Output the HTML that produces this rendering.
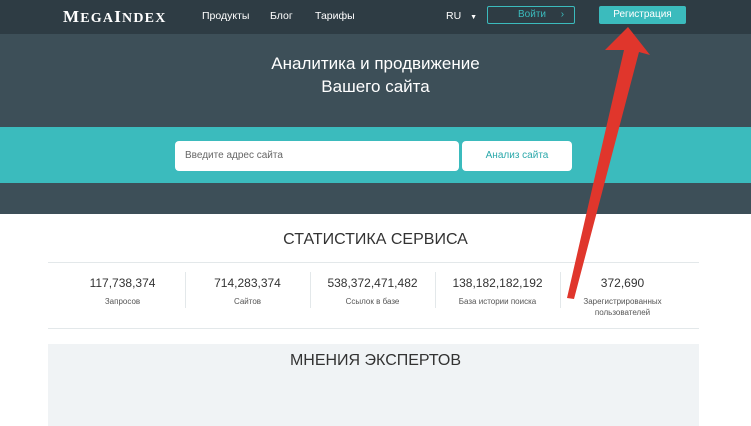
<!DOCTYPE html>
<html><head><meta charset="utf-8"><style>
*{margin:0;padding:0;box-sizing:border-box}
body{width:751px;height:426px;overflow:hidden;background:#fff;font-family:"Liberation Sans",sans-serif;position:relative}
.hdr{position:absolute;left:0;top:0;width:751px;height:34px;background:#2e3c44}
.logo{position:absolute;left:63px;top:7px;color:#fff;font-family:"Liberation Serif",serif;font-weight:bold;font-size:17px;letter-spacing:1.2px}
.nav{position:absolute;top:10px;color:#fff;font-size:10.5px}
.hero{position:absolute;left:0;top:34px;width:751px;height:93px;background:#3d4f58}
.hero h1{position:absolute;left:0;width:751px;top:18px;text-align:center;color:#fff;font-weight:normal;font-size:17px;line-height:23px}
.teal{position:absolute;left:0;top:127px;width:751px;height:56px;background:#3bbbbd}
.dark{position:absolute;left:0;top:183px;width:751px;height:31px;background:#3d4f58}
.inp{position:absolute;left:175px;top:141px;width:284px;height:30px;background:#fff;border-radius:4px;font-size:10px;color:#666;padding:9px 10px}
.btn{position:absolute;left:462px;top:141px;width:110px;height:30px;background:#fff;border-radius:4px;font-size:10px;color:#2aa8aa;text-align:center;line-height:30px}
.title{position:absolute;left:0;width:751px;text-align:center;color:#333;font-size:16px}
.line{position:absolute;left:48px;width:651px;height:1px;background:#e3e8ea}
.st{position:absolute;top:276px;width:125px;text-align:center}
.st b{display:block;font-weight:normal;font-size:12px;color:#333}
.st i{display:block;font-style:normal;font-size:8px;color:#555;margin-top:6px;line-height:11px}
.sep{position:absolute;top:272px;width:1px;height:36px;background:#e3e8ea}
.grey{position:absolute;left:48px;top:344px;width:651px;height:82px;background:#f0f3f5}
</style></head><body>
<div class="hdr">
<div class="logo">M<span style="font-size:14px">EGA</span>I<span style="font-size:14px">NDEX</span></div>
<div class="nav" style="left:202px">Продукты</div>
<div class="nav" style="left:270px">Блог</div>
<div class="nav" style="left:315px">Тарифы</div>
<div class="nav" style="left:446px">RU <span style="font-size:7px;margin-left:6px">▼</span></div>
<div style="position:absolute;left:487px;top:6px;width:88px;height:18px;border:1px solid #3bbbbd;border-radius:2px;color:#3bbbbd;font-size:10px;line-height:16px;padding-left:30px">Войти <span style="margin-left:12px">›</span></div>
<div style="position:absolute;left:599px;top:6px;width:87px;height:18px;background:#3bbbbd;border-radius:2px;color:#fff;font-size:10px;line-height:18px;text-align:center">Регистрация</div>
</div>
<div class="hero"><h1>Аналитика и продвижение<br>Вашего сайта</h1></div>
<div class="teal"></div><div class="dark"></div>
<div class="inp">Введите адрес сайта</div>
<div class="btn">Анализ сайта</div>
<div class="title" style="top:231px">СТАТИСТИКА СЕРВИСА</div>
<div class="line" style="top:262px"></div>
<div class="st" style="left:60px"><b>117,738,374</b><i>Запросов</i></div>
<div class="sep" style="left:185px"></div>
<div class="st" style="left:185px"><b>714,283,374</b><i>Сайтов</i></div>
<div class="sep" style="left:310px"></div>
<div class="st" style="left:310px"><b>538,372,471,482</b><i>Ссылок в базе</i></div>
<div class="sep" style="left:435px"></div>
<div class="st" style="left:435px"><b>138,182,182,192</b><i>База истории поиска</i></div>
<div class="sep" style="left:560px"></div>
<div class="st" style="left:560px"><b>372,690</b><i>Зарегистрированных<br>пользователей</i></div>
<div class="line" style="top:328px"></div>
<div class="grey"></div>
<div class="title" style="top:352px">МНЕНИЯ ЭКСПЕРТОВ</div>
<svg style="position:absolute;left:0;top:0" width="751" height="426"><polygon points="628,27 650,55 639,52 574,299 567,298 624,50 605,50" fill="#e0362c"/></svg>
</body></html>
